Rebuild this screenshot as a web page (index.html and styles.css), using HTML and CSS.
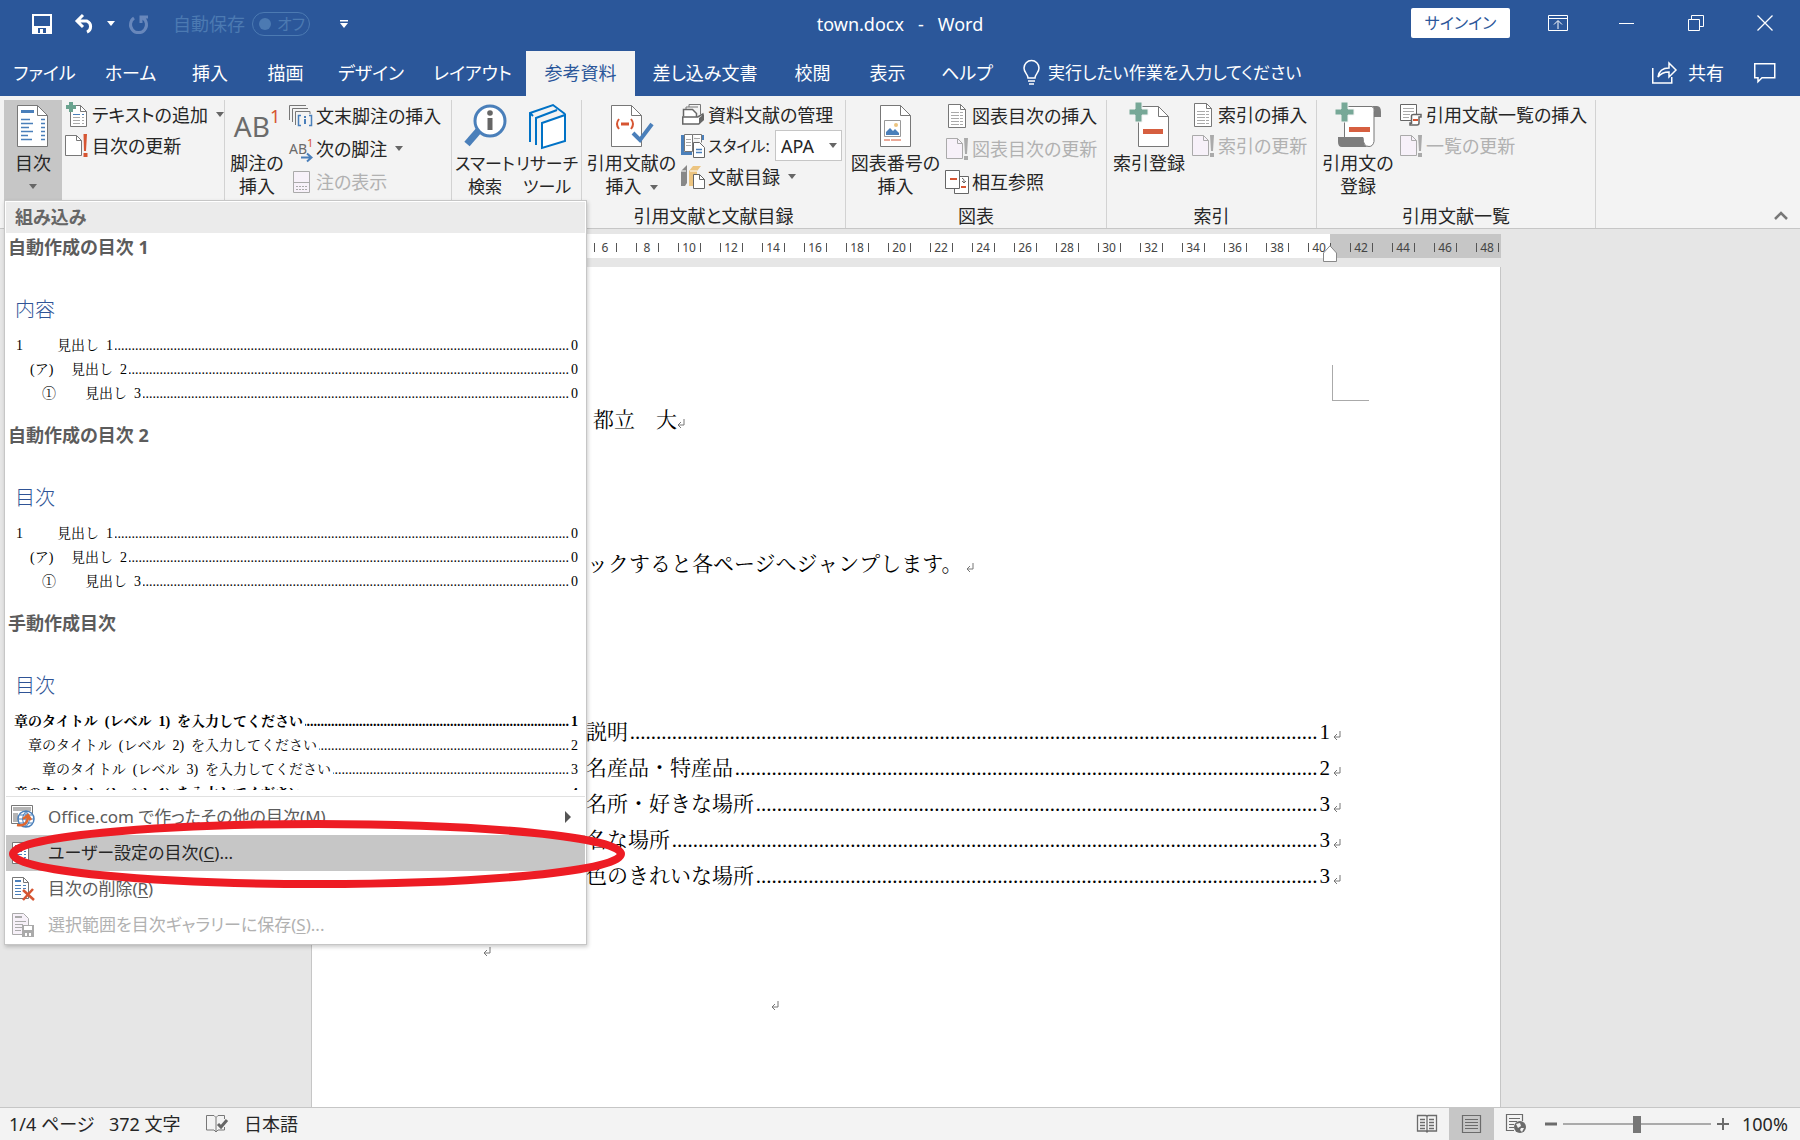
FILE: index.html
```html
<!DOCTYPE html>
<html lang="ja">
<head>
<meta charset="utf-8">
<title>town.docx - Word</title>
<link rel="stylesheet" href="styles.css">
</head>
<body>
<svg class="defs" aria-hidden="true">
  <symbol id="caret" viewBox="0 0 8 5"><path d="M0 0h8L4 5z" fill="currentColor"/></symbol>
  <symbol id="ret" viewBox="0 0 8 10"><path d="M7 0v6H1M4 3L1 6l3 3" fill="none" stroke="#777" stroke-width="1"/></symbol>
  <symbol id="doc-list" viewBox="0 0 18 24"><path d="M.5.5h12l5 5v18H.5z" fill="#fff" stroke="#777"/><path d="M12.500 .5v5h5" fill="none" stroke="#777"/><path d="M3 8.500h12M3 11.500h12M3 14.500h12M3 17.500h12M3 20.500h12" stroke="#aaa" stroke-dasharray="8 1"/></symbol>
  <symbol id="doc-update-off" viewBox="0 0 23 24"><path d="M.5 1.500h11l5 5v15H.5z" fill="#f7f1f9" stroke="#aaa"/><path d="M11.500 1.500v5h5" fill="none" stroke="#aaa"/><path d="M18 1h4l-1 16h-2zM18 19h4v4h-4z" fill="#aaa"/></symbol>
</svg>

<div class="app">
  <header class="titlebar">
    <div class="quick">
      <button class="q-save" aria-label="上書き保存"><svg width="20" height="20" viewBox="0 0 20 20"><path d="M1 1h18v18H1z" fill="none" stroke="#fff" stroke-width="2"/><path d="M1 12h18v7H1z" fill="#fff"/><path d="M6 14h8v5H6z" fill="#2b579a"/><path d="M8 15h3v4H8z" fill="#fff"/></svg></button>
      <button class="q-undo" aria-label="元に戻す"><svg width="22" height="20" viewBox="0 0 22 20"><path d="M9 1L3 7l6 6M3 7h10a6 6 0 0 1 0 11" fill="none" stroke="#fff" stroke-width="3"/></svg></button>
      <button class="q-more" aria-label="元に戻す一覧"><svg width="8" height="5"><use href="#caret"/></svg></button>
      <button class="q-redo" aria-label="やり直し" disabled><svg width="20" height="20" viewBox="0 0 20 20"><path d="M5 4a8 8 0 1 0 9 0M12 9V3h7" fill="none" stroke="#6887bb" stroke-width="3"/></svg></button>
      <label class="autosave">自動保存<input type="checkbox" disabled><span class="toggle"><i></i>オフ</span></label>
      <button class="q-custom" aria-label="クイック アクセスのカスタマイズ"><svg width="8" height="8" viewBox="0 0 8 8"><path d="M0 0h8v1.500H0zM0 3h8L4 8z" fill="#fff"/></svg></button>
    </div>
    <div class="doc-title">town.docx&nbsp;&nbsp; -&nbsp;&nbsp; Word</div>
    <div class="window-tools">
      <button class="signin">サインイン</button>
      <button class="win" aria-label="リボンの表示オプション"><svg width="20" height="16" viewBox="0 0 20 16"><path d="M.5.5h19v15H.5zM.5 3.500h19M10 14V6M6 9.500l4-4 4 4" fill="none" stroke="#fff"/></svg></button>
      <button class="win" aria-label="最小化"><svg width="16" height="16"><path d="M0 8.500h15" stroke="#fff"/></svg></button>
      <button class="win" aria-label="元のサイズに戻す"><svg width="16" height="16" viewBox="0 0 16 16"><path d="M.5 4.500h11v11H.5zM3.500 4V.5h12v11H12" fill="none" stroke="#fff"/></svg></button>
      <button class="win" aria-label="閉じる"><svg width="16" height="16"><path d="M.5.5l15 15M15.500 .5l-15 15" stroke="#fff" stroke-width="1.300"/></svg></button>
    </div>
  </header>

  <nav class="tabs">
    <div class="tablist">
      <button>ファイル</button><button>ホーム</button><button>挿入</button><button>描画</button><button>デザイン</button><button>レイアウト</button><button class="active">参考資料</button><button>差し込み文書</button><button>校閲</button><button>表示</button><button>ヘルプ</button>
    </div>
    <button class="tell-me"><svg width="17" height="25" viewBox="0 0 17 25"><path d="M5 18c0-4-4-5-4-10a7.500 7.500 0 0 1 15 0c0 5-4 6-4 10zM5 21h7M6 24h5" fill="none" stroke="#fff" stroke-width="1.500"/></svg>実行したい作業を入力してください</button>
    <div class="share-tools">
      <button class="share"><svg width="25" height="22" viewBox="0 0 25 22"><path d="M.75 6v15h19v-6M6 15c1-7 5-9 11-9V1l7 7-7 7v-5c-5 0-8 1-11 5z" fill="none" stroke="#fff" stroke-width="1.500"/></svg>共有</button>
      <button class="comment" aria-label="コメント"><svg width="22" height="20" viewBox="0 0 22 20"><path d="M.75.75h20v14H8l-4 4v-4H.75z" fill="none" stroke="#fff" stroke-width="1.500"/></svg></button>
    </div>
  </nav>

  <section class="ribbon" aria-label="参考資料">
    <div class="group g-toc">
      <div class="body">
        <button class="big pressed"><span class="art"><svg width="31" height="42" viewBox="0 0 31 42"><path d="M.5.5h20l10 10v31H.5z" fill="#fff" stroke="#777"/><path d="M20.500 .5v10h10" fill="none" stroke="#777"/><path d="M4 5h13v3H4z" fill="#4a7fba"/><path d="M4 14.500h9M4 18.500h12M4 22.500h8M4 26.500h12M4 30.500h7M4 34.500h11M24 14.500h4M24 18.500h4M24 22.500h4M24 26.500h4M24 30.500h4M24 34.500h4" stroke="#4a7fba" stroke-width="1.500"/></svg></span>目次<svg class="drop" width="8" height="5"><use href="#caret"/></svg></button>
        <div class="stack">
          <button class="cmd"><span class="ico"><svg width="22" height="26" viewBox="0 0 22 26"><path d="M4.500 3.500h10l6 6v15h-16z" fill="#fff" stroke="#777"/><path d="M14.500 3.500v6h6" fill="none" stroke="#777"/><path d="M7 12.500h11" stroke="#4a7fba" stroke-dasharray="7 2"/><path d="M7 15.500h11M7 18.500h11M7 21.500h11" stroke="#aaa" stroke-dasharray="7 2"/><path d="M3 0h4v3h3v4H7v3H3V7H0V3h3z" fill="#6aa38f"/></svg></span>テキストの追加<svg class="drop" width="8" height="5"><use href="#caret"/></svg></button>
          <button class="cmd"><span class="ico"><svg width="23" height="24" viewBox="0 0 23 24"><path d="M.5 1.500h11l5 5v15H.5z" fill="#fff" stroke="#777"/><path d="M11.500 1.500v5h5" fill="none" stroke="#777"/><path d="M18.500 0H22l-1 17h-2zM18.500 19h4v4h-4z" fill="#d65532"/></svg></span>目次の更新</button>
        </div>
      </div>
    </div>
    <div class="group g-note">
      <div class="body">
        <button class="big"><span class="art ab">AB<sup>1</sup></span>脚注の<br>挿入</button>
        <div class="stack loose">
          <button class="cmd"><span class="ico"><svg width="24" height="22" viewBox="0 0 24 22"><path d="M.5 15V.5H17M3.500 17V3.500H19M6.500 20V6.500H21V9" fill="none" stroke="#777"/><path d="M12 10.500H9.500v10H12M20 10.500h2.500v10H20" fill="none" stroke="#4a7fba" stroke-width="1.500"/><path d="M16 14v5M16 11v2" stroke="#4a7fba" stroke-width="2"/></svg></span>文末脚注の挿入</button>
          <button class="cmd"><span class="ico ab-small">AB<sup>1</sup><svg width="12" height="9" viewBox="0 0 12 9"><path d="M0 4.500h10M6 .5l4.500 4-4.500 4" fill="none" stroke="#4a7fba" stroke-width="2"/></svg></span>次の脚注<svg class="drop" width="8" height="5"><use href="#caret"/></svg></button>
          <button class="cmd" disabled><span class="ico"><svg width="17" height="22" viewBox="0 0 17 22"><path d="M.5.5h16v21H.5zM.5 11.500h16" fill="#f7f1f9" stroke="#aaa"/><path d="M3 15.500h11M3 18.500h11" stroke="#aaa" stroke-dasharray="2 1"/></svg></span>注の表示</button>
        </div>
      </div>
    </div>
    <div class="group g-search">
      <div class="body">
        <button class="big"><span class="art"><svg width="43" height="44" viewBox="0 0 43 44"><path d="M16 25L3 40" stroke="#4a7fba" stroke-width="7"/><circle cx="26" cy="17" r="15" fill="#fff" stroke="#4a7fba" stroke-width="3"/><path d="M26 14v12" stroke="#666" stroke-width="5"/><circle cx="26" cy="9" r="2.800" fill="#666"/></svg></span>スマート<br>検索</button>
        <button class="big"><span class="art"><svg width="37" height="44" viewBox="0 0 37 44"><path d="M1 38V9L24 1l12 9M7 41V14L28 6M1 9l3 3" fill="none" stroke="#0072c6" stroke-width="2"/><path d="M13 19l23-8v26l-23 7z" fill="#fff" stroke="#0072c6" stroke-width="2"/></svg></span>リサーチ<br>ツール</button>
      </div>
    </div>
    <div class="group g-cite">
      <div class="body">
        <button class="big"><span class="art"><svg width="42" height="42" viewBox="0 0 42 42"><path d="M.5.5h20l10 10v31H.5z" fill="#fff" stroke="#777"/><path d="M20.500 .5v10h10" fill="none" stroke="#777"/><path d="M8 14q-4 5 0 10M20 14q4 5 0 10" fill="none" stroke="#d65532" stroke-width="2"/><path d="M10 19h8" stroke="#d65532" stroke-width="3"/><path d="M22 28l7 7L41 19" fill="none" stroke="#4a7fba" stroke-width="4"/></svg></span><span>引用文献の</span><span>挿入<svg class="drop" width="8" height="5"><use href="#caret"/></svg></span></button>
        <div class="stack">
          <button class="cmd"><span class="ico"><svg width="23" height="21" viewBox="0 0 23 21"><path d="M7 3V.5h11.500v10M4 5.500V3h12" fill="none" stroke="#777"/><path d="M1.500 12.500v-7h9l4 4v4" fill="#fff" stroke="#666" stroke-width="1.500"/><path d="M.75 13h15l5-3v6l-4 4H.75z" fill="#fff" stroke="#666" stroke-width="1.500"/><path d="M17 14l5-4v6l-5 4z" fill="#666"/></svg></span>資料文献の管理</button>
          <div class="cmd style-row"><span class="ico"><svg width="24" height="24" viewBox="0 0 24 24"><path d="M0 1h3v17h8v3H0zM21 1h2v5h-2z" fill="#4a7fba"/><path d="M3.500.5h8v17h-8zM11.500.5h9v8" fill="#fff" stroke="#777"/><path d="M5 5.500h5M5 8.500h5M5 11.500h5M13 4.500h6" stroke="#aaa"/><path d="M12.500 8.500h6l5 5v10h-11z" fill="#fff" stroke="#666"/><path d="M15 15.500h6M15 18.500h6" stroke="#4a7fba" stroke-width="1.500"/></svg></span><label for="cite-style">スタイル:</label><span class="combo"><select id="cite-style"><option>APA</option></select><svg width="8" height="5"><use href="#caret"/></svg></span></div>
          <button class="cmd"><span class="ico"><svg width="24" height="24" viewBox="0 0 24 24"><path d="M0 6l6-6v18l-2 3H0z" fill="#888"/><path d="M8 6l4-5h8l-4 5v15H8z" fill="#ecc480"/><path d="M0 6h5M9 6h7" stroke="#fff"/><path d="M12.500 9.500h6l5 5v9h-11z" fill="#fff" stroke="#666"/><path d="M18.500 9.500v5h5" fill="none" stroke="#666"/></svg></span>文献目録<svg class="drop" width="8" height="5"><use href="#caret"/></svg></button>
        </div>
      </div>
      <h2>引用文献と文献目録</h2>
    </div>
    <div class="group g-figure">
      <div class="body">
        <button class="big"><span class="art"><svg width="31" height="42" viewBox="0 0 31 42"><path d="M.5.5h20l10 10v31H.5z" fill="#fff" stroke="#777"/><path d="M20.500 .5v10h10" fill="none" stroke="#777"/><path d="M4.500 15.500h16v16h-16z" fill="#fff" stroke="#999"/><path d="M6 30v-3l4-4 3 3 2-2 4 4v2z" fill="#4a7fba"/><circle cx="16" cy="20" r="2" fill="#ecc480"/><path d="M4 35h6M11 35h10" stroke="#d65532"/></svg></span>図表番号の<br>挿入</button>
        <div class="stack loose">
          <button class="cmd"><span class="ico"><svg width="18" height="24"><use href="#doc-list"/></svg></span>図表目次の挿入</button>
          <button class="cmd" disabled><span class="ico"><svg width="23" height="24"><use href="#doc-update-off"/></svg></span>図表目次の更新</button>
          <button class="cmd"><span class="ico"><svg width="24" height="24" viewBox="0 0 24 24"><path d="M9.500 6.500h14v17h-14z" fill="#fff" stroke="#666"/><path d="M.5.5h14v18H.5z" fill="#fff" stroke="#666"/><path d="M5 9h7M16 17h5" stroke="#d65532" stroke-width="2"/><path d="M17 8q3 1 2 5M17 11l2 2 2-2" fill="none" stroke="#666"/></svg></span>相互参照</button>
        </div>
      </div>
      <h2>図表</h2>
    </div>
    <div class="group g-index">
      <div class="body">
        <button class="big"><span class="art"><svg width="40" height="44" viewBox="0 0 40 44"><path d="M9.500 2.500h20l10 10v30h-30z" fill="#fff" stroke="#777"/><path d="M29.500 2.500v10h10" fill="none" stroke="#777"/><path d="M14 25h20v5H14z" fill="#d65f40"/><path d="M6-2h7v7h6v6h-6v7H6v-7H0V5h6z" fill="#77a897" stroke="#f3f3f3"/></svg></span>索引登録</button>
        <div class="stack">
          <button class="cmd"><span class="ico"><svg width="18" height="24"><use href="#doc-list"/></svg></span>索引の挿入</button>
          <button class="cmd" disabled><span class="ico"><svg width="23" height="24"><use href="#doc-update-off"/></svg></span>索引の更新</button>
        </div>
      </div>
      <h2>索引</h2>
    </div>
    <div class="group g-auth">
      <div class="body">
        <button class="big"><span class="art"><svg width="46" height="44" viewBox="0 0 46 44"><path d="M36 2h6q4 0 4 6v5h-7V6q0-3-3-4z" fill="#7d7d7d"/><path d="M9.500 34V2.500H37q3 2 2 5v30q-1 5-5 5-6 0-6-9z" fill="#fff" stroke="#777"/><path d="M3 33h25q0 10 6 10H7q-4 0-4-5z" fill="#7d7d7d"/><path d="M14 23h21v5H14z" fill="#d65f40"/><path d="M6-2h7v7h6v6h-6v7H6v-7H0V5h6z" fill="#77a897" stroke="#f3f3f3"/></svg></span>引用文の<br>登録</button>
        <div class="stack">
          <button class="cmd"><span class="ico"><svg width="22" height="22" viewBox="0 0 22 22"><path d="M.5.5h16v16H.5z" fill="#fff" stroke="#666"/><path d="M3 4.500h11M3 7.500h11M3 10.500h7M3 13.500h6" stroke="#aaa"/><path d="M11.500 20V11.500q0-1 2-1H21V13h-2v6q0 2-2 2h-7v-2h2" fill="#fff" stroke="#666" stroke-width="1.500"/><path d="M13 16h5" stroke="#d65532" stroke-width="2"/></svg></span>引用文献一覧の挿入</button>
          <button class="cmd" disabled><span class="ico"><svg width="23" height="24"><use href="#doc-update-off"/></svg></span>一覧の更新</button>
        </div>
      </div>
      <h2>引用文献一覧</h2>
    </div>
    <button class="collapse" aria-label="リボンを折りたたむ"><svg width="14" height="9" viewBox="0 0 14 9"><path d="M1 8l6-6 6 6" fill="none" stroke="#777" stroke-width="2.500"/></svg></button>
  </section>

  <main class="workspace">
    <div class="ruler" aria-hidden="true">
      <span><b>0</b></span><span><b>2</b></span><span><b>4</b></span><span><b>6</b></span><span><b>8</b></span><span><b>10</b></span><span><b>12</b></span><span><b>14</b></span><span><b>16</b></span><span><b>18</b></span><span><b>20</b></span><span><b>22</b></span><span><b>24</b></span><span><b>26</b></span><span><b>28</b></span><span><b>30</b></span><span><b>32</b></span><span><b>34</b></span><span><b>36</b></span><span><b>38</b></span><span class="indent"><b>40</b><svg width="14" height="17" viewBox="0 0 14 17"><path d="M.5 16.500V8L7 .8 13.500 8v8.500z" fill="#fff" stroke="#888"/></svg></span><span><b>42</b></span><span><b>44</b></span><span><b>46</b></span><span><b>48</b></span>
    </div>
    <article class="page">
      <i class="crop-mark"></i>
      <p class="author">都立　大<svg width="8" height="10"><use href="#ret"/></svg></p>
      <p class="lead">ックすると各ページへジャンプします。<svg width="8" height="10"><use href="#ret"/></svg></p>
      <ol class="toc">
        <li>説明<span class="dots"></span>1<svg width="8" height="10"><use href="#ret"/></svg></li>
        <li>名産品・特産品<span class="dots"></span>2<svg width="8" height="10"><use href="#ret"/></svg></li>
        <li>名所・好きな場所<span class="dots"></span>3<svg width="8" height="10"><use href="#ret"/></svg></li>
        <li>名な場所<span class="dots"></span>3<svg width="8" height="10"><use href="#ret"/></svg></li>
        <li>色のきれいな場所<span class="dots"></span>3<svg width="8" height="10"><use href="#ret"/></svg></li>
      </ol>
      <p class="empty-left"><svg width="8" height="10"><use href="#ret"/></svg></p>
      <p class="empty-mid"><svg width="8" height="10"><use href="#ret"/></svg></p>
    </article>
  </main>

  <footer class="status">
    <span class="pages">1/4 ページ</span>
    <span class="words">372 文字</span>
    <button class="proof" aria-label="文章校正"><svg width="22" height="18" viewBox="0 0 22 18"><path d="M10 17l-2-2H.5V.5H8l2 2 2-2h6.500V4M10 2.500V17l2-2h6.500v-3" fill="none" stroke="#777"/><path d="M12 9l3 3 6-7" fill="none" stroke="#666" stroke-width="3"/></svg></button>
    <span>日本語</span>
    <div class="views">
      <button aria-label="閲覧モード"><svg width="20" height="18" viewBox="0 0 20 18"><path d="M10 17l-1-1H.5V.5H9l1 1 1-1h8.500V16H11zM10 1v16M3 4.500h5M3 7.500h5M3 10.500h5M3 13.500h5M12 4.500h5M12 7.500h5M12 10.500h5M12 13.500h5" fill="none" stroke="#6b6b6b" stroke-width="1.300"/></svg></button>
      <button class="on" aria-label="印刷レイアウト"><svg width="20" height="18" viewBox="0 0 20 18"><path d="M.5.5h18v17H.5zM3 4.500h13M3 7.500h13M3 10.500h13M3 13.500h13" fill="none" stroke="#6b6b6b" stroke-width="1.200"/></svg></button>
      <button aria-label="Web レイアウト"><svg width="21" height="20" viewBox="0 0 21 20"><path d="M8 16.500H.5V.5h16V7M3 4.500h11M3 7.500h8M3 10.500h5M3 13.500h5" fill="none" stroke="#6b6b6b" stroke-width="1.200"/><circle cx="14" cy="13" r="6" fill="#6b6b6b"/><path d="M10 10l4-1 1 3-3 2zM15 14l3 0-2 4-2-2z" fill="#f3f3f3"/></svg></button>
    </div>
    <button class="zoom-step" aria-label="縮小"><svg width="12" height="12"><path d="M0 6h12" stroke="#6b6b6b" stroke-width="3"/></svg></button>
    <input class="zoom" type="range" min="0" max="100" value="50" aria-label="ズーム">
    <button class="zoom-step" aria-label="拡大"><svg width="12" height="12"><path d="M0 6h12M6 0v12" stroke="#6b6b6b" stroke-width="2"/></svg></button>
    <span class="percent">100%</span>
  </footer>

  <div class="menu">
    <h3 class="menu-head">組み込み</h3>
    <div class="gallery">
      <section>
        <h4>自動作成の目次 1</h4>
        <h5>内容</h5>
        <div class="row"><span class="num n1">1</span>見出し&ensp;1<span class="dots"></span>0</div>
        <div class="row l2"><span class="num n2">(ア)</span>見出し&ensp;2<span class="dots"></span>0</div>
        <div class="row l3"><span class="num n3">①</span>見出し&ensp;3<span class="dots"></span>0</div>
      </section>
      <section>
        <h4>自動作成の目次 2</h4>
        <h5>目次</h5>
        <div class="row"><span class="num n1">1</span>見出し&ensp;1<span class="dots"></span>0</div>
        <div class="row l2"><span class="num n2">(ア)</span>見出し&ensp;2<span class="dots"></span>0</div>
        <div class="row l3"><span class="num n3">①</span>見出し&ensp;3<span class="dots"></span>0</div>
      </section>
      <section>
        <h4>手動作成目次</h4>
        <h5>目次</h5>
        <div class="row strong">章のタイトル&ensp;(レベル&ensp;1)&ensp;を入力してください<span class="dots"></span>1</div>
        <div class="row l2">章のタイトル&ensp;(レベル&ensp;2)&ensp;を入力してください<span class="dots"></span>2</div>
        <div class="row l3">章のタイトル&ensp;(レベル&ensp;3)&ensp;を入力してください<span class="dots"></span>3</div>
        <div class="row strong">章のタイトル&ensp;(レベル&ensp;1)&ensp;を入力してください<span class="dots"></span>4</div>
      </section>
    </div>
    <div class="items">
      <button><svg width="24" height="24" viewBox="0 0 24 24"><path d="M.5.5h21v18H.5z" fill="#fff" stroke="#777"/><path d="M2 2h18v4H2zM2 8h5v9H2z" fill="#b5b5b5"/><circle cx="15" cy="14" r="8" fill="#fff" stroke="#4a7fba" stroke-width="1.500"/><path d="M15 6v16M7 14h16M9 10h12M9 18h12M15 6q-7 8 0 16M15 6q7 8 0 16" fill="none" stroke="#4a7fba"/><path d="M6 20q10 2 11-8M12 14l5-4 3 5" fill="none" stroke="#e0672f" stroke-width="2.500"/></svg>Office.com で作ったその他の目次(<u>M</u>)<svg class="sub" width="6" height="12"><path d="M0 0l6 6-6 6z" fill="#555"/></svg></button>
      <button class="hot"><svg width="24" height="24" viewBox="0 0 24 24"><path d="M1.500 1.500h11l5 5v16h-16z" fill="#fff" stroke="#777"/><path d="M4 5h7" stroke="#4a7fba" stroke-width="2"/><path d="M4 10.500h11M4 13.500h11M4 16.500h11M4 19.500h11" stroke="#4a7fba" stroke-dasharray="7 2"/></svg>ユーザー設定の目次(<u>C</u>)...<svg class="ring" width="618" height="70" viewBox="0 0 618 70" aria-hidden="true"><ellipse cx="309" cy="35" rx="304" ry="30" fill="none" stroke="#ed1c24" stroke-width="8"/></svg></button>
      <button><svg width="24" height="24" viewBox="0 0 24 24"><path d="M1.500.5h11l5 5v16h-16z" fill="#fff" stroke="#777"/><path d="M12.500.5v5h5" fill="none" stroke="#777"/><path d="M4 4h6" stroke="#4a7fba" stroke-width="2"/><path d="M4 8.500h11M4 11.500h11M4 14.500h8M4 17.500h8" stroke="#4a7fba" stroke-dasharray="6 2"/><path d="M12 13l11 10M22 12L12 23" stroke="#d65532" stroke-width="2.500"/></svg>目次の削除(<u>R</u>)</button>
      <button disabled><svg width="24" height="24" viewBox="0 0 24 24"><path d="M1.500.5h11l5 5v16h-16z" fill="#f7f1f9" stroke="#aaa"/><path d="M4 4h7" stroke="#aaa" stroke-width="2"/><path d="M4 8.500h11M4 11.500h8M4 14.500h8M4 17.500h6" stroke="#aaa"/><path d="M11 12h12v12H11z" fill="#aaa"/><path d="M13 13h8v4h-8zM14 20h6v3h-6z" fill="#fff"/><path d="M16 20h2v3h-2z" fill="#aaa"/></svg>選択範囲を目次ギャラリーに保存(<u>S</u>)...</button>
    </div>
  </div>
</div>
</body>
</html>
```
FILE: styles.css
```css
* { box-sizing: border-box; }
body {
  margin: 0;
  font: 18px/24px "Noto Sans", "Noto Sans CJK JP", sans-serif;
  font-feature-settings: "palt";
  color: #262626;
}
button, select {
  font: inherit;
  font-feature-settings: inherit;
  color: inherit;
  background: none;
  border: 0;
  padding: 0;
  margin: 0;
  white-space: nowrap;
}
h2, h3, h4, h5, p, ol { margin: 0; padding: 0; font-size: inherit; font-weight: 400; }
svg { display: block; flex: none; overflow: visible; }
.defs { position: absolute; width: 0; height: 0; }

.app { position: relative; display: flex; flex-direction: column; min-height: 100vh; }

/* Title bar */
.titlebar {
  display: grid;
  grid-template-columns: 1fr auto 1fr;
  height: 51px;
  background: #2b579a;
  color: #fff;
}
.quick { display: flex; align-items: center; height: 47px; padding-left: 32px; }
.q-undo { margin-left: 22px; }
.q-more { margin-left: 11px; }
.q-redo { margin-left: 14px; }
.autosave { display: flex; align-items: center; gap: 7px; margin-left: 24px; color: #4c7ab2; white-space: nowrap; }
.autosave input { position: absolute; opacity: 0; }
.toggle {
  display: flex; align-items: center; gap: 6px;
  width: 58px; height: 24px; padding-left: 6px;
  border: 1px solid #4c7ab2; border-radius: 12px;
  font-size: 16px;
}
.toggle i { flex: none; width: 12px; height: 12px; border-radius: 50%; background: #4c7ab2; }
.q-custom { margin-left: 30px; }
.doc-title { line-height: 48px; }
.window-tools { display: flex; justify-content: flex-end; height: 46px; }
.signin {
  align-self: center;
  width: 99px; height: 30px; margin-right: 13px;
  background: #fff; border-radius: 2px; color: #2b579a; font-size: 16px;
}
.win { display: grid; place-items: center; width: 69px; }
.win:last-child { margin-right: 1px; }

/* Tabs */
.tabs { display: flex; height: 45px; background: #2b579a; color: #fff; }
.tabs button { padding-bottom: 2px; }
.tablist { display: grid; grid-template-columns: 89px 83px 76px 75px 96px 107px 109px 140px 75px 75px 84px; }
.tablist .active { background: #f3f3f3; color: #2b579a; }
.tell-me { display: flex; align-items: center; gap: 8px; margin-left: 14px; font-size: 17px; }
.share-tools { display: flex; align-items: center; gap: 30px; margin-left: auto; padding-right: 24px; }
.share { display: flex; align-items: center; gap: 11px; }

/* Ribbon */
.ribbon {
  display: grid;
  grid-template-columns: 221px 227px 130px 264px 261px 210px 279px 1fr;
  height: 133px;
  padding: 4px 0 4px 4px;
  background: #f3f3f3;
  border-bottom: 1px solid #c6c6c6;
}
.group { display: flex; flex-direction: column; border-right: 1px solid #d2d2d2; }
.body { display: flex; height: 104px; }
.group h2 { line-height: 24px; text-align: center; }
.big {
  display: flex; flex-direction: column; align-items: center;
  padding-top: 4px;
  line-height: 23px;
}
.big .drop { margin: 9px 0 0; }
.big span .drop { display: inline-block; margin: 0 0 3px 8px; }
.art { display: flex; align-items: center; justify-content: center; height: 44px; margin-bottom: 4px; }
.pressed { background: #c6c6c6; }
.g-toc .big { width: 58px; margin-right: 3px; }
.g-note .big { width: 64px; }
.g-search .big { width: 66px; font-size: 17px; }
.g-search .big + .big { width: 58px; }
.g-cite .big { width: 99px; }
.g-figure .big { width: 99px; }
.g-index .big { width: 84px; }
.g-auth .big { width: 82px; }
.ab { font-size: 28px; color: #6b6b6b; }
.ab sup { align-self: flex-start; font-size: 18px; line-height: 24px; color: #d65532; }
.stack { display: flex; flex-direction: column; margin-top: -1px; }
.cmd { display: flex; align-items: center; gap: 3px; height: 31px; }
.loose .cmd { height: 33px; }
.cmd:disabled { color: #b1b1b1; }
.ico { display: flex; justify-content: center; width: 24px; flex: none; }
.ab-small { position: relative; justify-content: flex-start; font-size: 14px; color: #6b6b6b; }
.ab-small sup { font-size: 11px; line-height: 12px; color: #d65532; }
.ab-small svg { position: absolute; right: 0; bottom: -1px; }
.drop { color: #666; margin-left: 5px; }
.style-row label { width: 64px; font-size: 16px; white-space: nowrap; }
.combo { position: relative; display: block; }
.combo select {
  display: block; appearance: none;
  width: 67px; height: 31px; padding-left: 5px;
  border: 1px solid #c6c6c6; background: #fff;
}
.combo svg { position: absolute; right: 5px; top: 13px; color: #666; pointer-events: none; }
.collapse { align-self: end; justify-self: end; margin: 0 12px 8px 0; }

/* Document area */
.workspace { flex: 1; display: flex; flex-direction: column; padding: 5px 299px 0 311px; background: #e6e6e6; }
.ruler {
  display: flex; align-items: center;
  height: 24px; margin-bottom: 9px; padding: 3px 0 0 147px;
  background: linear-gradient(to left, #c6c6c6 171px, #fff 171px);
  clip-path: inset(0 0 -4px 0);
  font-size: 12px; color: #444;
}
.ruler span { flex: 0 0 42px; display: flex; justify-content: center; position: relative; }
.ruler b {
  width: 23px; height: 9px; line-height: 9px;
  border: solid #555; border-width: 0 1px;
  font-weight: 400; text-align: center;
}
.indent svg { position: absolute; left: 25px; top: 2px; }
.page {
  flex: 1; position: relative;
  padding-top: 135px;
  background: #fff; border: solid #c6c6c6; border-width: 0 1px;
  color: #000;
  font: 300 21px/36px "Liberation Serif", "Noto Serif CJK JP", "Noto Sans CJK JP", serif;
  font-feature-settings: normal;
}
.page p { display: flex; align-items: center; height: 36px; gap: 4px; }
.page p svg, .toc svg { margin-top: 8px; }
.crop-mark {
  position: absolute; right: 131px; top: 98px;
  width: 37px; height: 36px;
  border: solid #aaa; border-width: 0 0 1px 1px;
}
.page .author { padding-left: 281px; gap: 0; margin-bottom: 108px; }
.page .lead { padding-left: 275px; margin-bottom: 132px; }
.toc { list-style: none; padding: 0 162px 0 274px; margin-bottom: 36px; }
.toc li { display: flex; align-items: center; height: 36px; }
.toc svg { margin-left: 3px; margin-right: -3px; }
.dots { flex: 1; display: flex; justify-content: flex-end; overflow: hidden; margin: 0 2px; white-space: nowrap; }
.dots::before { content: "................................................................................................................................................................................"; }
.page .empty-left { padding-left: 171px; margin-bottom: 18px; }
.page .empty-mid { padding-left: 459px; }

/* Status bar */
.status {
  display: flex; align-items: center;
  height: 33px; padding: 0 9px;
  background: #f3f3f3; border-top: 1px solid #c6c6c6;
}
.pages { width: 100px; }
.words { width: 97px; }
.proof { margin-right: 16px; }
.views { display: flex; align-self: stretch; margin-left: auto; margin-right: 6px; }
.views button { display: grid; place-items: center; width: 45px; }
.views .on { background: #c6c6c6; }
.zoom { appearance: none; width: 148px; height: 18px; margin: 0 6px; background: linear-gradient(#aaa, #aaa) center / 100% 2px no-repeat; }
.zoom::-webkit-slider-thumb { appearance: none; width: 8px; height: 17px; background: #767676; }
.percent { width: 49px; margin-left: 13px; }

/* Table of contents menu */
.menu {
  position: absolute; left: 4px; top: 200px;
  width: 583px;
  padding: 1px;
  background: #fff; border: 1px solid #c6c6c6;
  box-shadow: 1px 2px 4px rgba(0, 0, 0, .2);
}
.menu-head { height: 31px; padding-left: 9px; line-height: 30px; background: #ebebeb; color: #666; font-weight: 700; }
.gallery { height: 557px; margin-bottom: 6px; overflow: hidden; padding: 0 7px 0 2px; }
.gallery section { height: 188px; }
.gallery h4 { line-height: 28px; height: 58px; font-weight: 700; color: #5c5c5c; }
.gallery h5 { height: 42px; padding-left: 7px; font-size: 20px; line-height: 38px; font-weight: 300; color: #2f5496; }
.row {
  display: flex; height: 24px; padding-left: 6px;
  font: 14px/25px "Liberation Serif", "Noto Serif CJK JP", "Noto Sans CJK JP", serif;
  font-feature-settings: normal;
  color: #000;
}
.l2 { padding-left: 20px; }
.l3 { padding-left: 34px; }
.strong { font-weight: 700; }
.num { width: 43px; }
.n1, .n2 { padding-left: 2px; }
.items { display: flex; flex-direction: column; border-top: 1px solid #e1e1e1; padding-top: 2px; font-size: 17px; }
.items button { position: relative; display: flex; align-items: center; height: 36px; padding: 0 14px 0 5px; color: #5c5c5c; text-align: left; }
.items button > svg:first-child { margin-right: 13px; }
.items .hot { background: #c6c6c6; color: #262626; z-index: 1; }
.items button:disabled { color: #b1b1b1; }
.items .sub { margin-left: auto; }
.items u { text-decoration-thickness: 1px; text-underline-offset: 2px; }
.items .ring { position: absolute; left: 2px; top: -16px; pointer-events: none; }
```
